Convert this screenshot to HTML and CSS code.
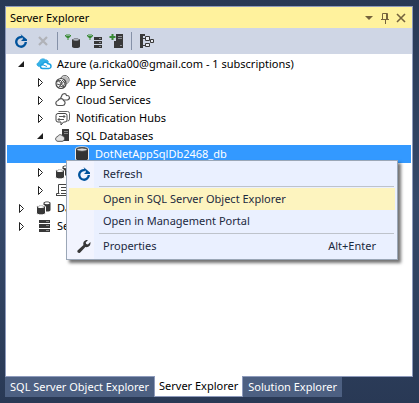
FILE: index.html
```html
<!DOCTYPE html>
<html lang="en">
<head>
<meta charset="utf-8">
<title>Server Explorer</title>
<link rel="stylesheet" href="styles.css">
</head>
<body>
<svg class="sprite" aria-hidden="true">
  <symbol id="refresh" viewBox="0 0 16 16"><path d="M9 4.200A4.800 4.800 0 1 0 12.800 9" fill="none" stroke="#00539c" stroke-width="2.400"/><path d="M7.500 1L14 6.500V2v6H8l2-2z" fill="#00539c"/></symbol>
  <symbol id="cancel" viewBox="0 0 16 16"><path d="M4 4l8 8M12 4l-8 8" fill="none" stroke="#b0b2b8" stroke-width="2.200"/></symbol>
  <symbol id="plug" viewBox="0 0 16 16"><path d="M2 1v2M4 1v2M3 5v2" stroke="#388a34" fill="none"/><path d="M0 2h1v1h4V2h1v1L4 5H2L0 3z" fill="#388a34"/></symbol>
  <symbol id="connect-db" viewBox="0 0 16 16"><use href="#plug"/><path d="M7 7v6.500c0 2 8 2 8 0V7c0-2-8-2-8 0z" fill="#383838"/><ellipse cx="11" cy="6.800" rx="3" ry="1" fill="#aeb2bb"/></symbol>
  <symbol id="connect-server" viewBox="0 0 16 16"><use href="#plug"/><path d="M7 4h8v3H7zM7 8h8v3H7zM7 12h8v3H7z" fill="#383838"/><path d="M12 5.500h2M12 9.500h2M12 13.500h2" stroke="#8b8e94"/></symbol>
  <symbol id="add-server" viewBox="0 0 16 16"><path d="M7 1h7v14H5V8h2z" fill="#383838"/><path d="M9 3.500h4M9 5.500h4M11 12.500h2" stroke="#8b8e94"/><path d="M3.500 1v6M.5 4h6" stroke="#388a34" stroke-width="2"/></symbol>
  <symbol id="hierarchy" viewBox="0 0 16 16"><path d="M1 1h5v2H4v12H1z" fill="#383838"/><path d="M4 5.500h3M4 12.500h3M6.500 3.500h4v4h-4zM6.500 10.500h4v3h-4zM11.500 6.500h3v3h-3z" fill="#e8eaf0" stroke="#383838"/></symbol>
  <symbol id="azure" viewBox="0 0 16 16"><path d="M3.500 10.500C0 10 .6 6.700 3 6.500 3.500 3 7.500 1.800 9.700 4c1.600-.3 2.700 1 2.700 2.500" fill="#32b2e8" stroke="#32a9e1"/><path d="M6.500 12.500c-2.800-.2-2.700-3.700 0-3.800.8-3 4-3.300 5.300-1 3.800-.4 4.300 4.500 1 4.800z" fill="#fff" stroke="#1ba1e2" stroke-width="1.500"/><path d="M5 8l6 2.500" stroke="#1ba1e2"/></symbol>
  <symbol id="app" viewBox="0 0 16 16"><circle cx="9.800" cy="5.800" r="4.300" fill="#fff" stroke="#555"/><path d="M7 3l3-1 3 2 1 3-2 3z" fill="#bbb"/><circle cx="6" cy="9.500" r="5" fill="#f5f5f5" stroke="#444" stroke-width="1.200"/><path d="M2 8l3-2 2 2-2 3-3-1m5-4l3 3-2 4-3-1M4 13l6-7M3 6l6 7" fill="none" stroke="#555"/></symbol>
  <symbol id="clouds" viewBox="0 0 16 16"><path d="M6.500 4.500C7 1 11 1 11.500 3.500 15 3.200 15.500 7 12.500 8H9C6 8 5 6 6.500 4.500z" fill="#fff" stroke="#555" stroke-width="1.200"/><path d="M3 8.500C4 6 8 6 8.500 8.500c2.500 1 1.800 5-1 5h-4C.3 13.800-.2 9.500 3 8.500z" fill="#fff" stroke="#555" stroke-width="1.200"/></symbol>
  <symbol id="hub" viewBox="0 0 16 16"><path d="M3.500 1.500h9q2 0 2 2V9q0 2-2 2" fill="none" stroke="#666"/><path d="M3 3.500h7q2 0 2 2V10q0 2-2 2H8.500l-2.500 3v-3H3q-2 0-2-2V5.500q0-2 2-2z" fill="#fff" stroke="#444"/><path d="M4 6.500h6M8.500 5L10 6.500 8.500 8M9 9.500H3M4.500 8L3 9.500 4.500 11" fill="none" stroke="#555"/></symbol>
  <symbol id="sql" viewBox="0 0 16 16"><path d="M7 1h7v12H7z" fill="#383838"/><path d="M9 3.500h4M9 5.500h4" stroke="#888"/><path d="M2.800 8.500C3.500 6.200 6.500 6.200 7.500 8c2.800.3 2.700 5.300-.5 5.300H3C-.2 13.300 0 8.800 2.800 8.500z" fill="#e4e4e4" stroke="#555"/></symbol>
  <symbol id="db" viewBox="0 0 16 16"><path d="M1.500 3v10c0 3 13 3 13 0V3c0-3-13-3-13 0z" fill="#333" stroke="#e8e8e8"/><ellipse cx="8" cy="3.600" rx="5.300" ry="1.700" fill="#ddd" stroke="#444"/></symbol>
  <symbol id="databases" viewBox="0 0 16 16"><path d="M7.500 3v7c0 2 7 2 7 0V3c0-2-7-2-7 0z" fill="#383838"/><ellipse cx="11" cy="3.200" rx="2.600" ry="1" fill="#fff"/><path d="M.5 7v6c0 2.500 9 2.500 9 0V7c0-2.500-9-2.500-9 0z" fill="#383838" stroke="#fff"/><ellipse cx="5" cy="7" rx="3.200" ry="1.100" fill="#fff"/></symbol>
  <symbol id="machine" viewBox="0 0 16 16"><path d="M3.500 11V2.500h10V11M1 13.500h13M1.500 13.500v-2h3" fill="none" stroke="#444"/><path d="M6 5.500h5M6 8.500h5M6 11.500h5" stroke="#444"/></symbol>
  <symbol id="servers" viewBox="0 0 16 16"><path d="M3 2h11v3H3zM3 6h11v4H3zM3 11h11v3H3z" fill="#383838"/><path d="M10 3.500h3M10 7.500h3M10 12.500h3" stroke="#888"/></symbol>
  <symbol id="wrench" viewBox="0 0 16 16"><path d="M1.500 12.500l6-5.500C6.500 4 9 1.300 12 2L9.700 4.500l.5 1.500 1.700.5L14.400 4c.6 3.500-2 5.800-5 5L4 14.800c-1.500.7-3.300-.8-2.500-2.300z" fill="#383838"/></symbol>
  <symbol id="closed" viewBox="0 0 16 16"><path d="M6.500 4.500v8l4-4z" fill="#fff" stroke="#222"/></symbol>
  <symbol id="open" viewBox="0 0 16 16"><path d="M11 5v6H5z" fill="#1e1e1e"/></symbol>
  <symbol id="caret" viewBox="0 0 16 16"><path d="M4 6h8l-4 4z" fill="#75633d"/></symbol>
  <symbol id="pin" viewBox="0 0 16 16"><path d="M5.500 9V3.500h5V9M4 9.500h8M8.500 10v4M9.500 4v5" fill="none" stroke="#75633d"/></symbol>
  <symbol id="close" viewBox="0 0 16 16"><path d="M4 4l8 8M12 4l-8 8" fill="none" stroke="#75633d" stroke-width="1.600"/></symbol>
</svg>
<main class="window">
  <section class="panel">
    <header class="titlebar">
      <h1>Server Explorer</h1>
      <button aria-label="Window position"><svg><use href="#caret"/></svg></button>
      <button aria-label="Auto hide"><svg><use href="#pin"/></svg></button>
      <button aria-label="Close"><svg><use href="#close"/></svg></button>
    </header>
    <div class="toolbar">
      <button aria-label="Refresh"><svg><use href="#refresh"/></svg></button>
      <button aria-label="Stop refresh" disabled><svg><use href="#cancel"/></svg></button>
      <span class="divider"></span>
      <button aria-label="Connect to database"><svg><use href="#connect-db"/></svg></button>
      <button aria-label="Connect to server"><svg><use href="#connect-server"/></svg></button>
      <button aria-label="Add server"><svg><use href="#add-server"/></svg></button>
      <span class="divider"></span>
      <button aria-label="Group by type"><svg><use href="#hierarchy"/></svg></button>
    </div>
    <ul class="tree">
      <li>
        <div class="row"><button aria-label="Collapse"><svg><use href="#open"/></svg></button><svg><use href="#azure"/></svg><span>Azure (a.ricka00@gmail.com - 1 subscriptions)</span></div>
        <ul class="level-1">
          <li class="row"><button aria-label="Expand"><svg><use href="#closed"/></svg></button><svg><use href="#app"/></svg><span>App Service</span></li>
          <li class="row"><button aria-label="Expand"><svg><use href="#closed"/></svg></button><svg><use href="#clouds"/></svg><span>Cloud Services</span></li>
          <li class="row"><button aria-label="Expand"><svg><use href="#closed"/></svg></button><svg><use href="#hub"/></svg><span>Notification Hubs</span></li>
          <li>
            <div class="row"><button aria-label="Collapse"><svg><use href="#open"/></svg></button><svg><use href="#sql"/></svg><span>SQL Databases</span></div>
            <ul class="level-2">
              <li class="row selected"><span class="leaf"></span><svg><use href="#db"/></svg><span>DotNetAppSqlDb2468_db</span>
                <div class="menu" role="menu">
                  <button role="menuitem"><svg><use href="#refresh"/></svg><span>Refresh</span></button>
                  <hr>
                  <button role="menuitem" class="active"><span>Open in SQL Server Object Explorer</span></button>
                  <button role="menuitem"><span>Open in Management Portal</span></button>
                  <hr>
                  <button role="menuitem"><svg><use href="#wrench"/></svg><span>Properties</span><kbd>Alt+Enter</kbd></button>
                </div>
              </li>
            </ul>
          </li>
          <li class="row"><button aria-label="Expand"><svg><use href="#closed"/></svg></button><svg><use href="#databases"/></svg></li>
          <li class="row"><button aria-label="Expand"><svg><use href="#closed"/></svg></button><svg><use href="#machine"/></svg></li>
        </ul>
      </li>
      <li class="row"><button aria-label="Expand"><svg><use href="#closed"/></svg></button><svg><use href="#databases"/></svg><span>Da</span></li>
      <li class="row"><button aria-label="Expand"><svg><use href="#closed"/></svg></button><svg><use href="#servers"/></svg><span>Se</span></li>
    </ul>
  </section>
  <nav class="tabs">
    <button>SQL Server Object Explorer</button>
    <button class="current">Server Explorer</button>
    <button>Solution Explorer</button>
  </nav>
</main>
</body>
</html>
```
FILE: styles.css
```css
* { box-sizing: border-box; }
body {
  margin: 0;
  background: linear-gradient(#293955, #35496a 50%, #293955);
  color: #000;
  font: 11px/18px "Noto Sans", "Open Sans", sans-serif;
}
.sprite { position: absolute; width: 0; height: 0; }
svg { display: block; flex: none; width: 16px; height: 16px; }
button {
  display: flex;
  align-items: center;
  margin: 0;
  padding: 0;
  border: 0;
  background: none;
  color: inherit;
  font: inherit;
  white-space: nowrap;
}
ul { margin: 0; padding: 0; list-style: none; }
.window {
  display: flex;
  flex-direction: column;
  height: 100vh;
  padding: 6px 6px 6px 5px;
}
.panel {
  display: flex;
  flex: 1;
  flex-direction: column;
  border: 1px solid #8e9bbc;
  background: #fff;
}
.titlebar {
  display: flex;
  align-items: center;
  height: 21px;
  padding: 0 3px 0 4px;
  background: #fff29d;
}
.titlebar h1 { flex: 1; margin: 0; font: inherit; }
.toolbar {
  display: flex;
  align-items: center;
  gap: 6px;
  height: 26px;
  padding: 0 7px;
  background: #cfd6e5;
}
.divider { width: 2px; height: 18px; border-left: 1px solid #8591a8; }
.tree { padding-top: 1px; }
.row {
  display: flex;
  align-items: center;
  height: 18px;
  padding-left: 7px;
  white-space: nowrap;
}
.row > button, .leaf { width: 16px; margin-right: 7px; }
.row > span:not(.leaf) { margin-left: 5px; }
.level-1 .row { padding-left: 26px; }
.level-2 .row { padding-left: 45px; }
.level-2 .selected {
  position: relative;
  margin: 0 1px;
  padding-left: 44px;
  background: #3399ff;
  color: #fff;
}
.menu {
  position: absolute;
  top: 15px;
  right: 13px;
  left: 59px;
  z-index: 1;
  padding: 2px;
  border: 1px solid #9ba7b7;
  background: linear-gradient(90deg, #f2f4fe 27px, #eaf0ff 27px);
  box-shadow: 3px 3px 3px rgba(0, 0, 0, 0.55);
  color: #1b293e;
}
.menu button { width: 100%; height: 22px; padding: 0 19px 0 7px; }
.menu button.active { background: #fdf4bf; }
.menu span { margin-left: 27px; }
.menu svg + span { margin-left: 11px; }
.menu kbd { margin-left: auto; font: inherit; }
.menu hr {
  height: 1px;
  margin: 1px 1px 1px 30px;
  border: 0;
  background: #bec3cb;
}
.tabs { display: flex; height: 20px; }
.tabs button { padding: 0 5px; background: #4d6082; color: #fff; }
.tabs .current {
  margin-top: -1px;
  padding: 0 4px;
  border: 1px solid #8e9bbc;
  border-top: 0;
  background: #fff;
  color: #000;
}
```
